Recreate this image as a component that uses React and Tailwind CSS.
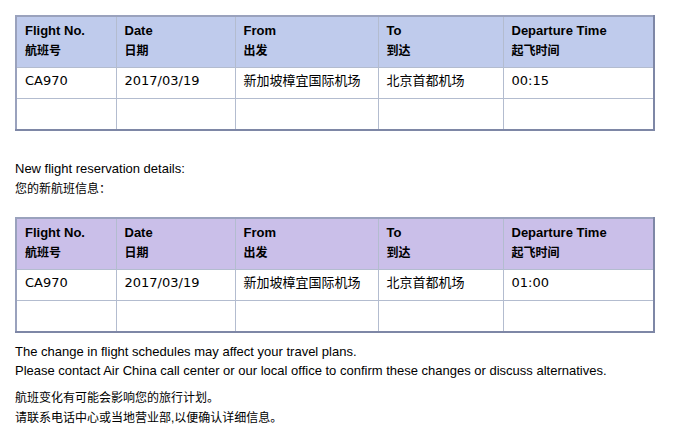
import React from "react";

const cols = ["w-[100px]", "w-[119px]", "w-[143px]", "w-[125px]", "w-[151px]"];

function FlightTable({ headBg, time }) {
  const heads = [
    ["Flight No.", "航班号"],
    ["Date", "日期"],
    ["From", "出发"],
    ["To", "到达"],
    ["Departure Time", "起飞时间"],
  ];
  const row = ["CA970", "2017/03/19", "新加坡樟宜国际机场", "北京首都机场", time];
  return (
    <table className="w-[640px] border-collapse border-2 border-t-[#9aa2bd] border-l-[#9aa2bd] border-r-[#7e87a6] border-b-[#7e87a6] table-fixed">
      <colgroup>
        {cols.map((c, i) => (
          <col key={i} className={c} />
        ))}
      </colgroup>
      <tbody>
        <tr className={`${headBg} h-[51px]`}>
          {heads.map(([en, zh], i) => (
            <td
              key={i}
              className="border border-[#b3bccf] px-[8px] align-top pt-[4px] text-[13px] leading-[20px] font-bold text-black"
              style={{ fontFamily: '"Liberation Sans", "Noto Sans CJK SC", sans-serif' }}
            >
              <div>{en}</div>
              <div className="text-[12px]">{zh}</div>
            </td>
          ))}
        </tr>
        <tr className="h-[31px] bg-white">
          {row.map((v, i) => (
            <td key={i} className="border border-[#b3bccf] px-[8px] text-[13px] leading-[18px] align-middle text-black pb-[3px]">
              {v}
            </td>
          ))}
        </tr>
        <tr className="h-[32px] bg-white">
          {row.map((_, i) => (
            <td key={i} className="border border-[#b3bccf]"></td>
          ))}
        </tr>
      </tbody>
    </table>
  );
}

export default function App() {
  return (
    <div
      className="w-[676px] h-[441px] bg-white pl-[15px] pt-[15px] text-black overflow-hidden"
      style={{ fontFamily: '"DejaVu Sans", "Noto Sans CJK SC", sans-serif' }}
    >
      <FlightTable headBg="bg-[#bfcbec]" time="00:15" />
      <div className="mt-[28px] text-[12.5px] leading-[20px]" style={{ fontFamily: '"Liberation Sans", "Noto Sans CJK SC", sans-serif' }}>
        <div className="text-[13px]">New flight reservation details:</div>
        <div className="text-[12px]">您的新航班信息：</div>
      </div>
      <div className="mt-[18px]">
        <FlightTable headBg="bg-[#cabfe9]" time="01:00" />
      </div>
      <div className="mt-[9px] leading-[19px] text-[13px]" style={{ fontFamily: '"Liberation Sans", "Noto Sans CJK SC", sans-serif' }}>
        <div>The change in flight schedules may affect your travel plans.</div>
        <div>Please contact Air China call center or our local office to confirm these changes or discuss alternatives.</div>
        <div className="mt-[8px] text-[12px] leading-[20px]">航班变化有可能会影响您的旅行计划。</div>
        <div className="text-[12px] leading-[20px]">请联系电话中心或当地营业部,以便确认详细信息。</div>
      </div>
    </div>
  );
}
